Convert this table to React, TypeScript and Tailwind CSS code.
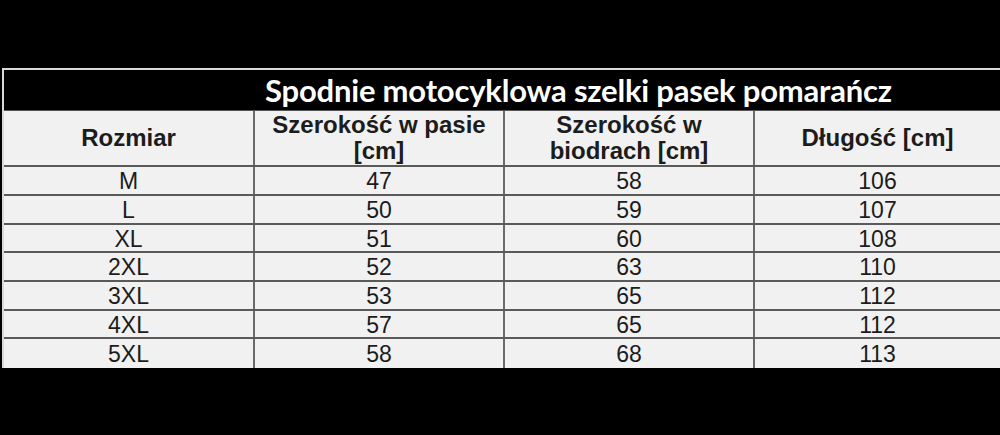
import React from "react";

const rows = [
  ["M", "47", "58", "106"],
  ["L", "50", "59", "107"],
  ["XL", "51", "60", "108"],
  ["2XL", "52", "63", "110"],
  ["3XL", "53", "65", "112"],
  ["4XL", "57", "65", "112"],
  ["5XL", "58", "68", "113"],
];

const heights = ["h-[29px]", "h-[29px]", "h-[28px]", "h-[29px]", "h-[29px]", "h-[28px]", "h-[29px]"];

export default function App() {
  return (
    <div className="w-[1000px] h-[435px] bg-black pt-[68px] overflow-hidden">
      <div className="ml-[2px] border-t-2 border-l-2 border-[#d9d9d9] bg-[#f1f1f1]">
        {/* title bar */}
        <div className="h-[41px] bg-black flex items-center pl-[261px] border-b border-[#555]">
          <span className="text-white font-bold text-[31px] leading-none font-['Lato',sans-serif] tracking-[-0.2px]">
            Spodnie motocyklowa szelki pasek pomarańcz
          </span>
        </div>

        {/* column headers */}
        <div className="grid grid-cols-[249px_250px_250px_1fr] h-[56px] border-b-2 border-[#5a5a5a] font-['Liberation_Sans',Arial,sans-serif] font-bold text-[#1c1c1c] text-[24px] leading-[26px] text-center">
          <div className="flex items-center justify-center">Rozmiar</div>
          <div className="flex items-center justify-center border-l-2 border-[#6a6a6a]">
            Szerokość w pasie
            <br />
            [cm]
          </div>
          <div className="flex items-center justify-center border-l-2 border-[#6a6a6a]">
            Szerokość w
            <br />
            biodrach [cm]
          </div>
          <div className="flex items-center justify-center border-l-2 border-[#6a6a6a]">Długość [cm]</div>
        </div>

        {/* data */}
        {rows.map((r, i) => (
          <div
            key={i}
            className={`grid grid-cols-[249px_250px_250px_1fr] ${heights[i]} ${
              i < rows.length - 1 ? "border-b-2 border-[#5a5a5a]" : ""
            } font-['Liberation_Sans',Arial,sans-serif] text-[#1c1c1c] text-[23px] leading-none text-center`}
          >
            {r.map((c, j) => (
              <div
                key={j}
                className={`flex items-center justify-center pt-[2px] ${j > 0 ? "border-l-2 border-[#6a6a6a]" : ""}`}
              >
                {c}
              </div>
            ))}
          </div>
        ))}
      </div>
    </div>
  );
}
